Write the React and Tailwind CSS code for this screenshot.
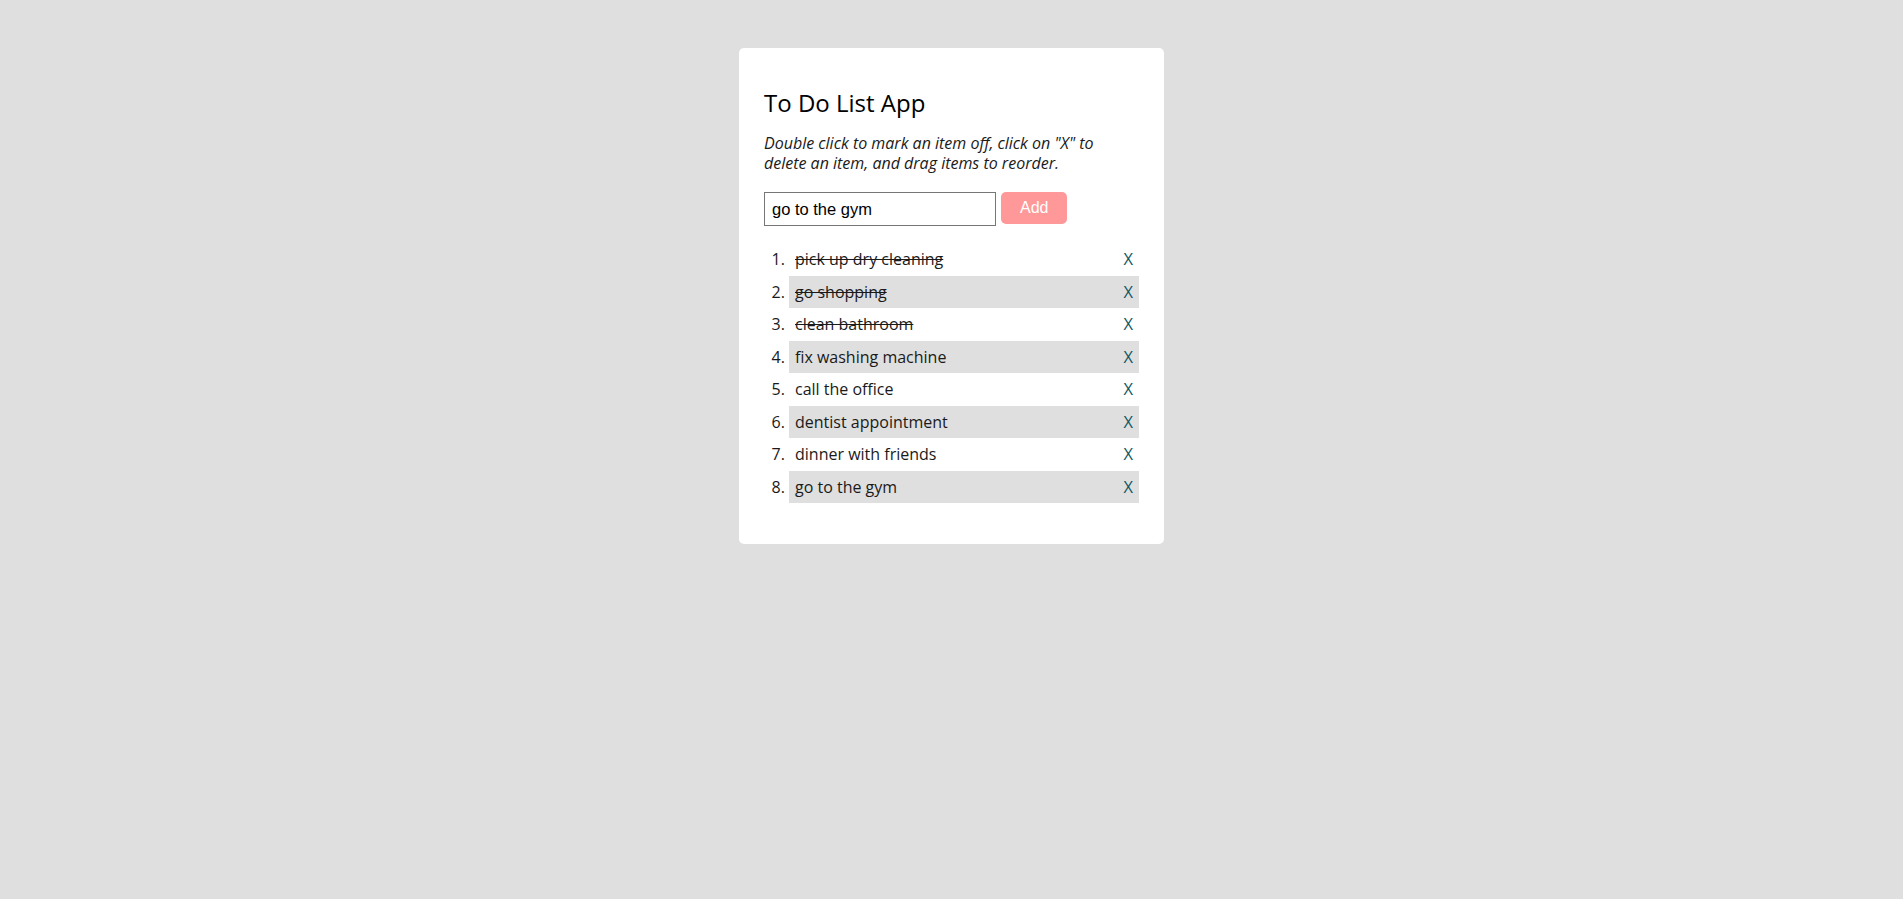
import React from 'react';

const items = [
  { text: "pick up dry cleaning", done: true },
  { text: "go shopping", done: true },
  { text: "clean bathroom", done: true },
  { text: "fix washing machine", done: false },
  { text: "call the office", done: false },
  { text: "dentist appointment", done: false },
  { text: "dinner with friends", done: false },
  { text: "go to the gym", done: false },
];

const App = () => {
  return (
    <div className="min-h-screen w-full bg-[#dfdfdf] pt-[48px] font-['Open_Sans',sans-serif]">
      <div className="w-[425px] mx-auto bg-white rounded-[5px] px-[25px] pt-[38px] pb-[41px]">
        {/* Header */}
        <h1 className="text-[24px] leading-[33px] font-medium text-black">To Do List App</h1>
        <p className="mt-[14px] max-w-[350px] text-[16px] leading-[20px] italic text-[#1a1a1a]">
          Double click to mark an item off, click on "X" to delete an item, and drag items to reorder.
        </p>

        {/* New item form */}
        <div className="mt-[19px] flex items-start gap-[5px]">
          <input
            type="text"
            defaultValue="go to the gym"
            className="w-[232px] h-[34px] border border-[#767676] px-[7px] text-[16.5px] text-black font-['Liberation_Sans',Arial,sans-serif] outline-none"
          />
          <button className="h-[32px] px-[19px] rounded-[5px] bg-[#f99] text-white text-[16px] font-['Liberation_Sans',Arial,sans-serif]">
            Add
          </button>
        </div>

        {/* List */}
        <ol className="mt-[17px] pl-[25px] list-decimal text-[16px] text-[#1a1a1a]">
          {items.map((item, index) => (
            <li
              key={index}
              className={`py-[5px] leading-[22.5px] ${index % 2 === 1 ? "bg-[#dfdfdf]" : "bg-white"}`}
            >
              <div className="flex items-center justify-between pl-[6px] pr-[6px]">
                <span className={item.done ? "line-through" : ""}>{item.text}</span>
                <span className="text-[#0f5866] text-[16.5px] font-medium">X</span>
              </div>
            </li>
          ))}
        </ol>
      </div>
    </div>
  );
};

export default App;
